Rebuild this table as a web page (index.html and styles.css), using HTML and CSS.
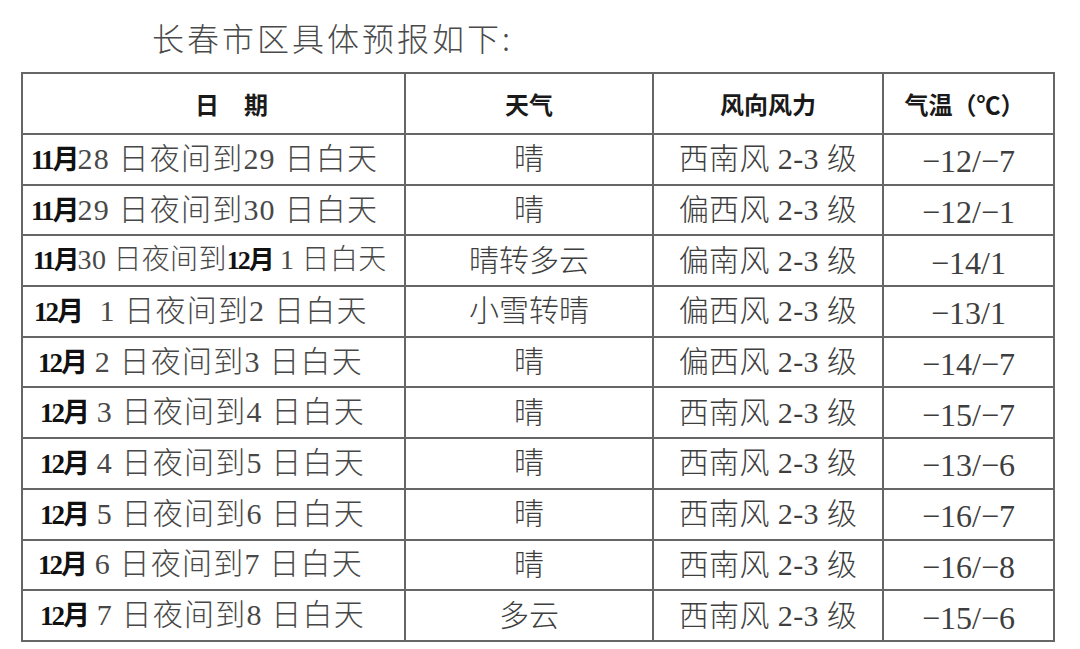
FILE: index.html
```html
<!DOCTYPE html>
<html lang="zh-CN">
<head>
<meta charset="utf-8">
<title>长春市区具体预报</title>
<link rel="stylesheet" href="styles.css">
</head>
<body>
<div class="page">
  <h1 class="title">长春市区具体预报如下:</h1>
  <table class="forecast">
    <colgroup>
      <col class="c-date"><col class="c-wx"><col class="c-wind"><col class="c-temp">
    </colgroup>
    <thead>
      <tr>
        <th class="h-date">日<span class="gap"></span>期</th>
        <th>天气</th>
        <th>风向风力</th>
        <th class="h-temp">气温（℃）</th>
      </tr>
    </thead>
    <tbody>
      <tr><td class="date"><span class="m">11月</span>28 日夜间到29 日白天</td><td class="wx">晴</td><td class="wind">西南风 2-3 级</td><td class="temp">−12/−7</td></tr>
      <tr><td class="date"><span class="m">11月</span>29 日夜间到30 日白天</td><td class="wx">晴</td><td class="wind">偏西风 2-3 级</td><td class="temp">−12/−1</td></tr>
      <tr><td class="date i1"><span class="m">11月</span>30 日夜间到<span class="m">12月</span> 1 日白天</td><td class="wx">晴转多云</td><td class="wind">偏南风 2-3 级</td><td class="temp">−14/1</td></tr>
      <tr><td class="date i2"><span class="m">12月</span>&nbsp; 1 日夜间到2 日白天</td><td class="wx">小雪转晴</td><td class="wind">偏西风 2-3 级</td><td class="temp">−13/1</td></tr>
      <tr><td class="date i3"><span class="m">12月</span> 2 日夜间到3 日白天</td><td class="wx">晴</td><td class="wind">偏西风 2-3 级</td><td class="temp">−14/−7</td></tr>
      <tr><td class="date i4"><span class="m">12月</span> 3 日夜间到4 日白天</td><td class="wx">晴</td><td class="wind">西南风 2-3 级</td><td class="temp">−15/−7</td></tr>
      <tr><td class="date i4"><span class="m">12月</span> 4 日夜间到5 日白天</td><td class="wx">晴</td><td class="wind">西南风 2-3 级</td><td class="temp">−13/−6</td></tr>
      <tr><td class="date i4"><span class="m">12月</span> 5 日夜间到6 日白天</td><td class="wx">晴</td><td class="wind">西南风 2-3 级</td><td class="temp">−16/−7</td></tr>
      <tr><td class="date i3"><span class="m">12月</span> 6 日夜间到7 日白天</td><td class="wx">晴</td><td class="wind">西南风 2-3 级</td><td class="temp">−16/−8</td></tr>
      <tr><td class="date i4"><span class="m">12月</span> 7 日夜间到8 日白天</td><td class="wx">多云</td><td class="wind">西南风 2-3 级</td><td class="temp">−15/−6</td></tr>
    </tbody>
  </table>
</div>
</body>
</html>
```

FILE: styles.css
```css
html, body {
  margin: 0;
  padding: 0;
  background: #ffffff;
}

.page {
  padding: 16px 0 0 21px;
}

.title {
  margin: 0 0 14px 131px;
  font-family: "Noto Sans CJK SC", sans-serif;
  font-weight: 300;
  font-size: 32px;
  line-height: 42px;
  letter-spacing: 3px;
  color: #4a4a4a;
}

.forecast {
  border-collapse: collapse;
  width: 1032px;
  table-layout: fixed;
  font-family: "Liberation Serif", "Noto Sans CJK SC", serif;
  color: #3e3e3e;
}

.c-date { width: 383px; }
.c-wx { width: 248px; }
.c-wind { width: 230px; }
.c-temp { width: 171px; }

.forecast th,
.forecast td {
  border: 2px solid #666666;
  padding: 0;
}

.forecast thead tr {
  height: 61px;
}

.forecast th {
  font-family: "Noto Sans CJK SC", sans-serif;
  font-weight: 700;
  font-size: 24px;
  color: #1a1a1a;
  text-align: center;
}

.forecast th.h-date {
  padding-left: 36px;
}

.forecast th.h-temp {
  padding-right: 8px;
}

.gap {
  display: inline-block;
  width: 25px;
}

.forecast tbody tr {
  height: 50.7px;
}

.forecast td {
  font-size: 30px;
  line-height: 32px;
  text-align: center;
  white-space: nowrap;
  overflow: hidden;
}

.forecast td.date {
  text-align: left;
  padding-left: 8px;
  letter-spacing: 1.2px;
  font-weight: 300;
  color: #484848;
}

.forecast td.date.i1 {
  padding-left: 10px;
  font-size: 28px;
  letter-spacing: 0.3px;
}
.forecast td.date.i2 { padding-left: 11px; }
.forecast td.date.i3 { padding-left: 15px; }
.forecast td.date.i4 { padding-left: 17px; }

.m {
  font-family: "Liberation Serif", "Noto Sans CJK SC", serif;
  font-weight: 700;
  font-size: 27px;
  letter-spacing: -2px;
  color: #111111;
}

.i1 .m {
  font-size: 26px;
}

.forecast td.wx,
.forecast td.wind {
  font-weight: 300;
}

.forecast td.wind {
  letter-spacing: 0.4px;
}

.forecast td.temp {
  font-size: 32px;
  padding-top: 4px;
}
```
